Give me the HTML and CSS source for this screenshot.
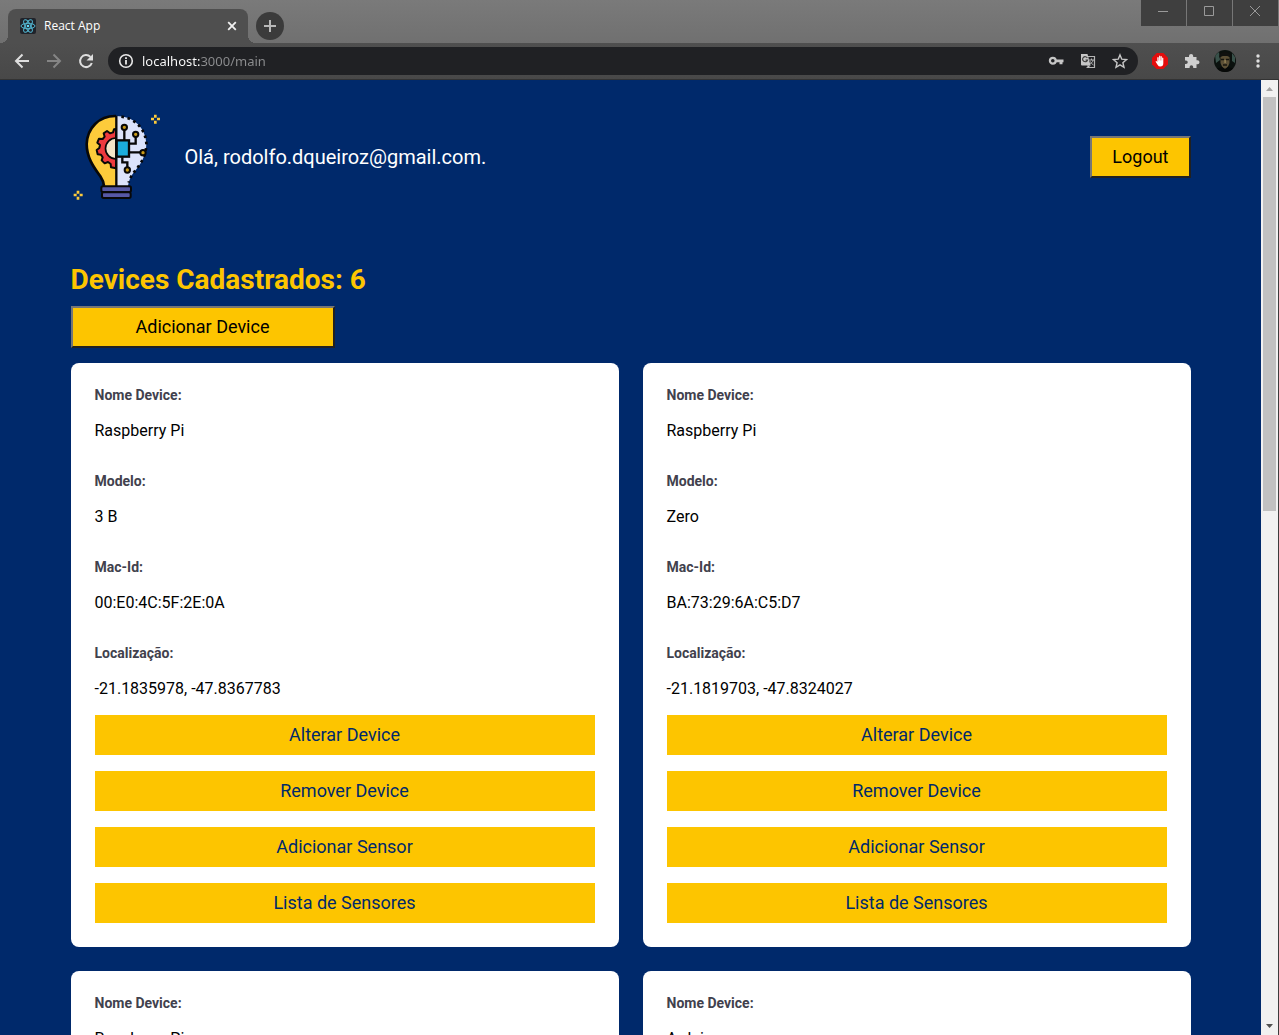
FILE: index.html
```html
<!DOCTYPE html>
<html lang="pt-BR">
<head>
<meta charset="utf-8">
<meta name="viewport" content="width=device-width, initial-scale=1">
<title>React App</title>
<link rel="stylesheet" href="styles.css">
</head>
<body>
<div class="tabstrip">
  <div class="tab">
    <svg class="favicon" viewBox="0 0 16 16" aria-hidden="true"><rect width="16" height="16" rx="2" fill="#20232a"/><g fill="none" stroke="#53b7d2" stroke-width="1"><ellipse cx="8" cy="8" rx="7" ry="2.7"/><ellipse cx="8" cy="8" rx="7" ry="2.7" transform="rotate(60 8 8)"/><ellipse cx="8" cy="8" rx="7" ry="2.7" transform="rotate(120 8 8)"/></g><circle cx="8" cy="8" r="1.3" fill="#61dafb"/></svg>
    <span class="tab-title">React App</span>
    <button class="icon-button" aria-label="Fechar guia"><svg viewBox="0 0 16 16" class="icon"><path d="M4.2 4.2l7.6 7.6M11.8 4.2l-7.6 7.6" stroke="#f1f1f1" stroke-width="1.8"/></svg></button>
  </div>
  <button class="new-tab" aria-label="Nova guia"><svg viewBox="0 0 16 16" class="icon"><path d="M8 2v12M2 8h12" stroke="#b8b8b8" stroke-width="2"/></svg></button>
  <div class="window-controls">
    <button class="window-button" aria-label="Minimizar"><svg viewBox="0 0 12 12" class="window-icon"><path d="M1 6.5h10"/></svg></button>
    <button class="window-button" aria-label="Maximizar"><svg viewBox="0 0 12 12" class="window-icon"><path d="M1.500 1.500h9v9h-9z"/></svg></button>
    <button class="window-button" aria-label="Fechar"><svg viewBox="0 0 12 12" class="window-icon"><path d="M1 1l10 10M11 1L1 11"/></svg></button>
  </div>
</div>
<div class="toolbar">
  <div class="nav-buttons">
    <button class="icon-button" aria-label="Voltar"><svg viewBox="0 0 16 16" class="icon"><path d="M15 8H2M8.500 1.500L2 8l6.500 6.500" fill="none" stroke="#dedede" stroke-width="2"/></svg></button>
    <button class="icon-button" aria-label="Avançar"><svg viewBox="0 0 16 16" class="icon"><path d="M1 8h13M7.500 1.500L14 8l-6.500 6.500" fill="none" stroke="#858585" stroke-width="2"/></svg></button>
    <button class="icon-button" aria-label="Recarregar"><svg viewBox="0 0 16 16" class="icon"><path d="M13.800 10A6 6 0 1 1 12.400 3.900" fill="none" stroke="#dedede" stroke-width="2"/><path d="M15 1v6.500H8.500z" fill="#dedede"/></svg></button>
  </div>
  <div class="omnibox">
    <svg viewBox="0 0 16 16" class="icon" aria-hidden="true"><circle cx="8" cy="8" r="6.300" fill="none" stroke="#e8e8e8" stroke-width="1.600"/><path d="M8 7v4.500M8 4.200v1.800" stroke="#e8e8e8" stroke-width="1.800"/></svg>
    <input class="address" type="text" aria-label="Endereço" value="localhost:3000/main">
    <div class="omnibox-actions">
      <svg viewBox="0 0 16 16" class="icon" aria-hidden="true"><circle cx="4.800" cy="7.700" r="2.900" fill="none" stroke="#c6c6c6" stroke-width="2.200"/><path d="M8 6.500h7.500v2.700h-1v2h-3v-2H8z" fill="#c6c6c6"/></svg>
      <svg viewBox="0 0 16 16" class="icon" aria-hidden="true"><path d="M7 3.500h7.500v11H6.500" fill="none" stroke="#b5b5b5" stroke-width="1.200"/><path d="M1 1h6.500l3 11.500H2a1 1 0 0 1-1-1z" fill="#c6c6c6"/><path d="M7.300 5A2.500 2.500 0 1 0 7.500 7H5.500" fill="none" stroke="#3b3b3b" stroke-width="1.200"/><path d="M9 7h5M11.500 5.500V7M13 7c0 2-2 3.500-3 4M10.500 8.500c.5 1.500 2 3 3 3.500" fill="none" stroke="#b5b5b5" stroke-width="1"/><path d="M7 12.500h3.500L8 15z" fill="#c6c6c6"/></svg>
      <svg viewBox="0 0 16 16" class="icon" aria-hidden="true"><path d="M8 1.900l1.800 4.300 4.700.4-3.600 3.100 1.100 4.600L8 11.800l-4 2.500 1.100-4.600-3.600-3.100 4.700-.4z" fill="none" stroke="#c6c6c6" stroke-width="1.400"/></svg>
    </div>
  </div>
  <div class="extensions">
    <svg viewBox="0 0 16 16" class="icon" aria-hidden="true"><path d="M4.700 0h6.600L16 4.700v6.600L11.300 16H4.700L0 11.300V4.700z" fill="#e40d0d"/><path d="M5.300 4.500V9L4.500 8l-1 .5L5.700 12Q6.500 13.500 8.300 13.500q3 0 3-3.200V5q-.6-.8-1.200 0v2.500h-.3V3.500q-.6-.8-1.200 0v4h-.3V3q-.6-.8-1.200 0v4.500H6.700v-3q-.7-.8-1.400 0z" fill="#fff"/></svg>
    <svg viewBox="0 0 16 16" class="icon" aria-hidden="true"><path d="M1 4h4V3a2 2 0 0 1 4.200 0v1h3.300v3.300h1a2 2 0 0 1 0 4h-1V15H9.200v-1a1.800 1.800 0 0 0-3.600 0v1H1v-4h1a1.700 1.700 0 0 0 0-3.500H1z" fill="#d0d0d0"/></svg>
    <svg viewBox="0 0 22 22" class="avatar" aria-hidden="true"><defs><clipPath id="avatar-clip"><circle cx="11" cy="11" r="11"/></clipPath></defs><g clip-path="url(#avatar-clip)"><path fill="#0b110e" d="M0 0h22v22H0z"/><path fill="#39514a" d="M1 5l4-3 1 8-4 3zM18 3l3 4v6l-3-2z"/><path fill="#5c5036" d="M6.500 7q4.500-3 9 0v6q-1.500 5-4.500 6-3-1-4.500-6z"/><path fill="#10110f" d="M5 8q0-6 6-6t6 6l-2-2H7z"/><path d="M7 9.500h3M12 9.500h3M9 15h4" stroke="#17160f" stroke-width="1.500"/><path fill="#a08c5b" d="M10.500 10h1.200v3h-1.200z"/><path fill="#070908" d="M1 19l7-2 3 2 3-2 7 2v3H1z"/></g></svg>
    <button class="icon-button" aria-label="Menu"><svg viewBox="0 0 16 16" class="icon"><g fill="#e0e0e0"><circle cx="8" cy="3" r="1.700"/><circle cx="8" cy="8" r="1.700"/><circle cx="8" cy="13" r="1.700"/></g></svg></button>
  </div>
</div>
<div class="viewport">
  <div class="page">
    <main class="container">
      <header class="header">
        <svg class="logo" viewBox="33 36 270 270" role="img" aria-label="Logo">
          <path d="M168 48C116 47 82 85 80 132c0 43 24 73 41 97 6 9 10 19 11 29h37z" fill="#fdcb3b"/>
          <path d="M168 48c54 0 89 36 91 83 0 38-19 64-39 88-8 11-14 24-16 39h-36z" fill="#dce3fb"/>
          <path d="M168 48C116 47 82 85 80 132c0 43 24 73 41 97 6 9 10 19 11 29" fill="none" stroke="#080808" stroke-width="8"/>
          <path d="M184 50c43 5 73 39 75 81 0 38-19 64-39 88-6 8-11 18-14 29" fill="none" stroke="#080808" stroke-width="8" stroke-dasharray="8 11"/>
          <path d="M168 87l-6 1-3 9-9 3-9-7-10 7 3 10-6 7-11-1-5 12 8 7-2 9-8 6 3 13 10 1 5 8-3 9 9 9 10-4 8 6 1 10 15 3z" fill="#ee3a3e" stroke="#080808" stroke-width="6" stroke-linejoin="round"/>
          <path d="M168 114a31 31 0 0 0 0 63z" fill="#f4e6c8" stroke="#080808" stroke-width="5"/>
          <path d="M169 47v211M193 89v31M227 110v21h-19M208 157h35M187 172v15h15v16" fill="none" stroke="#080808" stroke-width="7"/>
          <rect x="170" y="121" width="37" height="49" fill="#1baddc" stroke="#080808" stroke-width="7"/>
          <g fill="#c99b19" stroke="#080808" stroke-width="6"><circle cx="193" cy="82" r="8"/><circle cx="227" cy="103" r="8"/><circle cx="249" cy="158" r="8"/><circle cx="202" cy="210" r="8"/></g>
          <g fill="#5658a5" stroke="#080808" stroke-width="6"><rect x="124" y="259" width="89" height="17" rx="5"/><rect x="126" y="277" width="86" height="17" rx="5"/></g>
          <path d="M286 44v9M286 62v9M273 57h9M291 57h9M54 272v9M54 290v9M41 285h9M59 285h9" stroke="#fdcb3b" stroke-width="8"/>
        </svg>
        <p class="greeting">Olá, rodolfo.dqueiroz@gmail.com.</p>
        <button class="button">Logout</button>
      </header>
      <h1 class="title">Devices Cadastrados: 6</h1>
      <button class="button button-add">Adicionar Device</button>
      <ul class="devices">
        <li class="card">
          <dl class="fields">
            <dt>Nome Device:</dt><dd>Raspberry Pi</dd>
            <dt>Modelo:</dt><dd>3 B</dd>
            <dt>Mac-Id:</dt><dd>00:E0:4C:5F:2E:0A</dd>
            <dt>Localização:</dt><dd>-21.1835978, -47.8367783</dd>
          </dl>
          <div class="actions">
            <a class="action" href="#alterar">Alterar Device</a>
            <a class="action" href="#remover">Remover Device</a>
            <a class="action" href="#adicionar">Adicionar Sensor</a>
            <a class="action" href="#sensores">Lista de Sensores</a>
          </div>
        </li>
        <li class="card">
          <dl class="fields">
            <dt>Nome Device:</dt><dd>Raspberry Pi</dd>
            <dt>Modelo:</dt><dd>Zero</dd>
            <dt>Mac-Id:</dt><dd>BA:73:29:6A:C5:D7</dd>
            <dt>Localização:</dt><dd>-21.1819703, -47.8324027</dd>
          </dl>
          <div class="actions">
            <a class="action" href="#alterar">Alterar Device</a>
            <a class="action" href="#remover">Remover Device</a>
            <a class="action" href="#adicionar">Adicionar Sensor</a>
            <a class="action" href="#sensores">Lista de Sensores</a>
          </div>
        </li>
        <li class="card">
          <dl class="fields"><dt>Nome Device:</dt><dd>Raspberry Pi</dd></dl>
        </li>
        <li class="card">
          <dl class="fields"><dt>Nome Device:</dt><dd>Arduino</dd></dl>
        </li>
      </ul>
    </main>
  </div>
  <div class="scrollbar">
    <button class="scroll-button" aria-label="Rolar para cima"><svg viewBox="0 0 17 17" class="scroll-icon"><path d="M5 11l3.500-4 3.500 4z" fill="#a3a3a3"/></svg></button>
    <div class="track"><div class="thumb"></div></div>
    <button class="scroll-button" aria-label="Rolar para baixo"><svg viewBox="0 0 17 17" class="scroll-icon"><path d="M5 6l3.500 4L12 6z" fill="#505050"/></svg></button>
  </div>
</div>
</body>
</html>
```
FILE: styles.css
```css
* {
  box-sizing: border-box;
  margin: 0;
  padding: 0;
}

body {
  display: flex;
  flex-direction: column;
  height: 100vh;
  overflow: hidden;
  font-family: Roboto, "Liberation Sans", sans-serif;
  background: #00296b;
}

button {
  font: inherit;
}

/* Browser window */
.tabstrip {
  display: flex;
  flex: none;
  align-items: flex-end;
  height: 43px;
  padding: 0 1px 0 8px;
  background: linear-gradient(#7a7a7a, #707070);
}

.tab {
  position: relative;
  display: flex;
  align-items: center;
  gap: 8px;
  width: 240px;
  height: 34px;
  padding: 0 8px 0 12px;
  border-radius: 8px 8px 0 0;
  background: #4f4f4f;
}

.tab::before,
.tab::after {
  content: "";
  position: absolute;
  bottom: 0;
  width: 8px;
  height: 8px;
}

.tab::before {
  left: -8px;
  background: radial-gradient(circle at 0 0, transparent 8px, #4f4f4f 8px);
}

.tab::after {
  right: -8px;
  background: radial-gradient(circle at 100% 0, transparent 8px, #4f4f4f 8px);
}

.favicon,
.icon {
  display: block;
  flex: none;
  width: 16px;
  height: 16px;
}

.tab-title {
  flex: 1;
  font: 12px/16px "Open Sans", "Noto Sans", sans-serif;
  color: #fff;
}

.icon-button {
  border: 0;
  background: none;
}

.new-tab {
  display: grid;
  place-items: center;
  width: 28px;
  height: 28px;
  margin: 0 0 3px 8px;
  border: 0;
  border-radius: 50%;
  background: #3b3b3b;
}

.window-controls {
  display: flex;
  gap: 1px;
  align-self: flex-start;
  margin-left: auto;
}

.window-button {
  display: grid;
  place-items: center;
  width: 45px;
  height: 26px;
  padding: 0 2px 4px 0;
  border: 0;
  background: #3f3f3f;
}

.window-icon {
  width: 12px;
  height: 12px;
  fill: none;
  stroke: #9a9a9a;
  stroke-width: 1;
}

.toolbar {
  display: flex;
  flex: none;
  align-items: center;
  gap: 14px;
  height: 37px;
  padding: 0 13px 0 14px;
  border-bottom: 1px solid #333;
  background: linear-gradient(#4f4f4f, #484848);
}

.nav-buttons,
.omnibox-actions,
.extensions {
  display: flex;
  align-items: center;
  gap: 16px;
}

.omnibox {
  display: flex;
  flex: 1;
  align-items: center;
  gap: 8px;
  height: 28px;
  padding: 0 10px;
  border-radius: 14px;
  background: #202124;
}

/* The host name is white, the port and path are grey */
.address {
  flex: 1;
  min-width: 0;
  border: 0;
  outline: 0;
  font: 13px/20px "Noto Sans", sans-serif;
  color: transparent;
  background: linear-gradient(90deg, #fff 58px, #8d8e90 58px);
  background-clip: text;
  -webkit-background-clip: text;
}

.avatar {
  width: 22px;
  height: 22px;
  margin: 0 -2px;
}

.viewport {
  display: flex;
  flex: 1;
  min-height: 0;
  border-right: 1px solid #3c3c3c;
}

.scrollbar {
  display: flex;
  flex-direction: column;
  width: 17px;
  background: #f1f1f1;
}

.scroll-button {
  height: 17px;
  border: 0;
  background: none;
}

.scroll-icon {
  display: block;
}

.track {
  flex: 1;
  padding: 0 2px;
}

.thumb {
  height: 45%;
  background: #c1c1c1;
}

/* Page */
.page {
  flex: 1;
  overflow: hidden;
}

.container {
  max-width: 1180px;
  margin: 0 auto;
  padding: 32px 30px;
}

.header {
  display: flex;
  align-items: center;
  gap: 24px;
  height: 90px;
}

.logo {
  width: 90px;
  height: 90px;
}

.greeting {
  flex: 1;
  font-size: 20px;
  line-height: 24px;
  color: #fff;
}

.button {
  height: 42px;
  padding: 0 20px 2px;
  border: 2px solid;
  border-color: #767676 #212121 #212121 #767676;
  font-size: 18px;
  color: #000;
  background: #fdc500;
  cursor: pointer;
}

.title {
  margin-top: 60px;
  font-size: 28px;
  line-height: 36px;
  color: #fdc500;
}

.button-add {
  display: block;
  width: 264px;
  margin-top: 8px;
}

.devices {
  display: grid;
  grid-template-columns: 1fr 1fr;
  grid-auto-rows: 1fr;
  gap: 24px;
  margin-top: 15px;
  list-style: none;
}

.card {
  padding: 24px;
  border-radius: 8px;
  background: #fff;
}

.fields dt {
  font-size: 14px;
  font-weight: 700;
  line-height: 16px;
  color: #41414d;
}

.fields dd {
  margin: 16px 0 30px;
  font-size: 16px;
  line-height: 24px;
  color: #000;
}

.fields dd:last-child {
  margin-bottom: 14px;
}

.actions {
  display: grid;
  gap: 16px;
}

.action {
  font-size: 18px;
  line-height: 40px;
  text-align: center;
  text-decoration: none;
  color: #00296b;
  background: #fdc500;
}
```
